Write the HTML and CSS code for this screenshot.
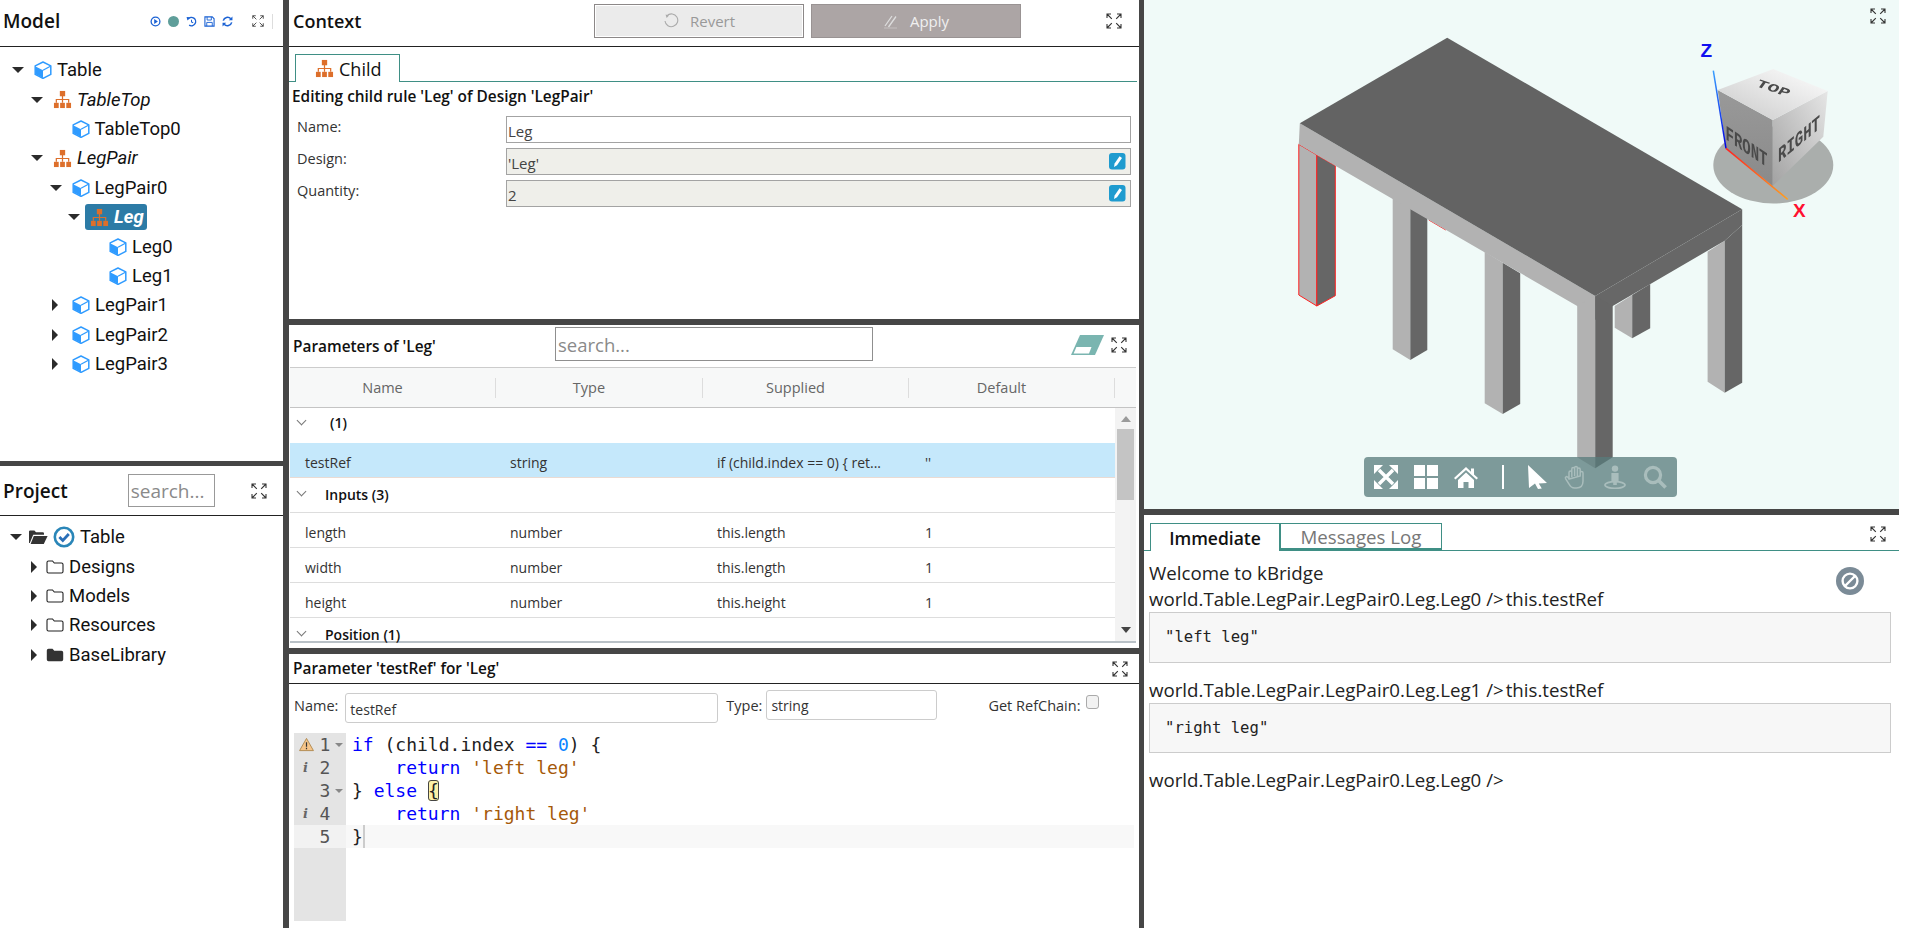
FILE: index.html
```html
<!DOCTYPE html>
<html lang="en">
<head>
<meta charset="utf-8">
<title>kBridge</title>
<link rel="stylesheet" href="styles.css">
</head>
<body>
<svg class="defs" width="0" height="0" aria-hidden="true">
  <symbol id="cube" viewBox="0 0 18 18">
    <path d="M9 1 16.8 4.8V13.4L9 17.4 1.2 13.4V4.8Z" fill="#fff" stroke="#2f9bff" stroke-width="1.5" stroke-linejoin="round"/>
    <path d="M1.6 5.4 9 9.2V17L1.6 13.2Z" fill="#2f9bff"/>
    <path d="M9 9.2 16.4 5.2" stroke="#2f9bff" stroke-width="1.3" fill="none"/>
  </symbol>
  <symbol id="org" viewBox="0 0 20 20">
    <g fill="#dd6f2b">
      <rect x="7.2" y="1" width="5.6" height="5.6"/>
      <rect x="1" y="13.5" width="5" height="5.5"/>
      <rect x="7.5" y="13.5" width="5" height="5.5"/>
      <rect x="14" y="13.5" width="5" height="5.5"/>
    </g>
    <path d="M10 6V13.5M3.5 13.5V10H16.5V13.5" fill="none" stroke="#dd6f2b" stroke-width="1.3"/>
  </symbol>
  <symbol id="full" viewBox="0 0 16 16">
    <path d="M1 5V1H5M1 1 5.8 5.8M11 1H15V5M15 1 10.2 5.8M1 11V15H5M1 15 5.8 10.2M15 11V15H11M15 15 10.2 10.2" fill="none" stroke="#333" stroke-width="1.1"/>
  </symbol>
  <symbol id="pencil" viewBox="0 0 17 17">
    <rect width="16.5" height="16.5" rx="3" fill="#1f9bcf"/>
    <path d="M5 14 5.6 10.6 10.6 3.2 13 5 8 12.2Z" fill="#fff"/>
  </symbol>
  <symbol id="folder" viewBox="0 0 18 16">
    <path d="M1 3.5Q1 2 2.5 2H6.5L8.3 4H15.5Q17 4 17 5.5V12.5Q17 14 15.5 14H2.5Q1 14 1 12.5Z" fill="none" stroke="#222" stroke-width="1.1"/>
  </symbol>
  <symbol id="folderfill" viewBox="0 0 18 16">
    <path d="M.8 3.5Q.8 1.8 2.5 1.8H6.5L8.3 3.8H15.5Q17.2 3.8 17.2 5.5V12.5Q17.2 14.2 15.5 14.2H2.5Q.8 14.2.8 12.5Z" fill="#333"/>
  </symbol>
</svg>

<main class="app">
  <section class="col col-left">
    <div class="panel model-panel">
      <header class="head head-model">
        <h2 class="title-lg">Model</h2>
        <div class="model-tools">
          <svg class="tool" viewBox="0 0 12 12"><circle cx="6" cy="6" r="4.8" fill="none" stroke="#1b62d4" stroke-width="1.4"/><path d="M4.6 3.4 8.6 6 4.6 8.6Z" fill="#1b62d4"/></svg>
          <span class="dot"></span>
          <svg class="tool" viewBox="0 0 12 12"><path d="M2.2 3.4A4.6 4.6 0 1 1 3.4 10" fill="none" stroke="#1b62d4" stroke-width="1.5"/><path d="M.6 1.2 4.6 1.4 1.6 5Z" fill="#1b62d4"/><path d="M6 4V6.4L7.8 7.4" fill="none" stroke="#1b62d4" stroke-width="1.1"/></svg>
          <svg class="tool" viewBox="0 0 12 12"><path d="M1 1H9L11 3V11H1Z" fill="#fff" stroke="#1b62d4" stroke-width="1.2"/><path d="M3.4 1V4.4H8V1M3 11V7H9V11" fill="none" stroke="#1b62d4" stroke-width="1"/></svg>
          <svg class="tool" viewBox="0 0 12 12"><path d="M1.4 5A4.8 4.8 0 0 1 9.6 3M10.6 7A4.8 4.8 0 0 1 2.4 9" fill="none" stroke="#1b62d4" stroke-width="1.7"/><path d="M11.4 .6V4.6H7.4ZM.6 11.4V7.4H4.6Z" fill="#1b62d4"/></svg>
        </div>
        <svg class="full full-sm"><use href="#full"/></svg>
        <span class="tick"></span>
      </header>
      <div class="tree tree-model">
        <div class="row l0"><i class="arr down"></i><svg class="ico"><use href="#cube"/></svg><span>Table</span></div>
        <div class="row l1"><i class="arr down"></i><svg class="ico org"><use href="#org"/></svg><em>TableTop</em></div>
        <div class="row l2"><i class="arr none"></i><svg class="ico"><use href="#cube"/></svg><span>TableTop0</span></div>
        <div class="row l1"><i class="arr down"></i><svg class="ico org"><use href="#org"/></svg><em>LegPair</em></div>
        <div class="row l2"><i class="arr down"></i><svg class="ico"><use href="#cube"/></svg><span>LegPair0</span></div>
        <div class="row l3"><i class="arr down"></i><span class="sel"><svg class="ico org"><use href="#org"/></svg><em>Leg</em></span></div>
        <div class="row l4"><i class="arr none"></i><svg class="ico"><use href="#cube"/></svg><span>Leg0</span></div>
        <div class="row l4"><i class="arr none"></i><svg class="ico"><use href="#cube"/></svg><span>Leg1</span></div>
        <div class="row l2"><i class="arr right"></i><svg class="ico"><use href="#cube"/></svg><span>LegPair1</span></div>
        <div class="row l2"><i class="arr right"></i><svg class="ico"><use href="#cube"/></svg><span>LegPair2</span></div>
        <div class="row l2"><i class="arr right"></i><svg class="ico"><use href="#cube"/></svg><span>LegPair3</span></div>
      </div>
    </div>
    <div class="panel project-panel">
      <header class="head head-project">
        <h2 class="title-lg">Project</h2>
        <input class="search-sm" placeholder="search...">
        <svg class="full"><use href="#full"/></svg>
      </header>
      <div class="tree tree-project">
        <div class="row p0"><i class="arr down"></i>
          <svg class="fold-open" viewBox="0 0 20 16"><path d="M1 14V2.6Q1 1.4 2.2 1.4H6.4L8 3.2H14.8Q16 3.2 16 4.4V5.8H5.2L1.8 14Z" fill="#333"/><path d="M5.8 7H19.6L15.8 15H2.6Z" fill="#333"/></svg>
          <svg class="check" viewBox="0 0 22 22"><circle cx="11" cy="11" r="9.2" fill="#fff" stroke="#2a86b8" stroke-width="2.6"/><path d="M6.4 11 9.8 14.4 15.8 8" fill="none" stroke="#2a6fb8" stroke-width="2.8"/></svg>
          <span>Table</span></div>
        <div class="row p1"><i class="arr right"></i><svg class="fold"><use href="#folder"/></svg><span>Designs</span></div>
        <div class="row p1"><i class="arr right"></i><svg class="fold"><use href="#folder"/></svg><span>Models</span></div>
        <div class="row p1"><i class="arr right"></i><svg class="fold"><use href="#folder"/></svg><span>Resources</span></div>
        <div class="row p1"><i class="arr right"></i><svg class="fold"><use href="#folderfill"/></svg><span>BaseLibrary</span></div>
      </div>
    </div>
  </section>

  <section class="col col-center">
    <div class="panel context-panel">
      <header class="head head-context">
        <h2 class="title-ctx">Context</h2>
        <button class="btn btn-revert"><svg class="btn-ico" viewBox="0 0 16 16"><path d="M4 2.6A6.4 6.4 0 1 1 2 8" fill="none" stroke="#aaa" stroke-width="1.1"/><path d="M2.6 1.4 6 2.4 3.6 5Z" fill="#aaa"/></svg>Revert</button>
        <button class="btn btn-apply"><svg class="btn-ico" viewBox="0 0 16 16"><path d="M2 13 9 3M5.5 14 13 3.5" fill="none" stroke="#ddd" stroke-width="1.3"/><path d="M1 15H14" stroke="#c4bfbf" stroke-width="1"/></svg>Apply</button>
        <svg class="full full-ctx"><use href="#full"/></svg>
      </header>
      <div class="tabs tabs-ctx">
        <div class="tab tab-on"><svg class="ico-tab"><use href="#org"/></svg>Child</div>
      </div>
      <p class="edit-title">Editing child rule 'Leg' of Design 'LegPair'</p>
      <div class="form">
        <label>Name:</label><div class="field"><span>Leg</span></div>
        <label>Design:</label><div class="field ro"><span>'Leg'</span><svg class="pen"><use href="#pencil"/></svg></div>
        <label>Quantity:</label><div class="field ro"><span>2</span><svg class="pen"><use href="#pencil"/></svg></div>
      </div>
    </div>

    <div class="panel params-panel">
      <header class="head head-params">
        <h3 class="title-sm title-params">Parameters of 'Leg'</h3>
        <input class="search-lg" placeholder="search...">
        <svg class="eraser" viewBox="0 0 35 22"><path d="M10 1H34L25 21H1Z" fill="#7ab5b0"/><path d="M6.4 13H21.5L19 19.4H3.6Z" fill="#fff"/></svg>
        <svg class="full"><use href="#full"/></svg>
      </header>
      <div class="grid-wrap">
        <div class="grid-head">
          <div>Name</div><div>Type</div><div>Supplied</div><div>Default</div>
        </div>
        <div class="grid-body">
          <div class="grid-rows">
            <div class="g-group g-first"><i class="chev"></i><b class="g-one">(1)</b></div>
            <div class="g-row g-sel"><span>testRef</span><span>string</span><span>if (child.index == 0) { ret...</span><span>''</span></div>
            <div class="g-group g-mid"><i class="chev"></i><b>Inputs (3)</b></div>
            <div class="g-row"><span>length</span><span>number</span><span>this.length</span><span>1</span></div>
            <div class="g-row"><span>width</span><span>number</span><span>this.length</span><span>1</span></div>
            <div class="g-row"><span>height</span><span>number</span><span>this.height</span><span>1</span></div>
            <div class="g-group g-last"><i class="chev"></i><b>Position (1)</b></div>
          </div>
          <div class="sbar">
            <i class="s-up"></i>
            <i class="s-thumb"></i>
            <i class="s-down"></i>
          </div>
        </div>
      </div>
    </div>

    <div class="panel param-panel">
      <header class="head head-param">
        <h3 class="title-sm">Parameter 'testRef' for 'Leg'</h3>
        <svg class="full"><use href="#full"/></svg>
      </header>
      <div class="param-fields">
        <label>Name:</label><div class="pf pf-name">testRef</div>
        <label class="lbl-type">Type:</label><div class="pf pf-type">string</div>
        <label class="lbl-ref">Get RefChain:</label><span class="cb"></span>
      </div>
      <div class="editor">
        <div class="gutter">
          <div class="g-line"><svg class="warn" viewBox="0 0 16 15"><path d="M8 1 15.4 14H.6Z" fill="#f6c58a" stroke="#b08a50" stroke-width="1"/><path d="M8 5V10M8 11V12.6" stroke="#333" stroke-width="1.3"/></svg><span class="num">1</span><i class="fold-arr"></i></div>
          <div class="g-line"><em class="info">i</em><span class="num">2</span></div>
          <div class="g-line"><span class="num">3</span><i class="fold-arr"></i></div>
          <div class="g-line"><em class="info">i</em><span class="num">4</span></div>
          <div class="g-line g-active"><span class="num">5</span></div>
        </div>
        <div class="code">
          <div class="c-line"><span class="kw">if</span> (child.index <span class="kw">==</span> <span class="nb">0</span>) {</div>
          <div class="c-line">    <span class="kw">return</span> <span class="st">'left leg'</span></div>
          <div class="c-line">} <span class="kw">else</span> <span class="br">{</span></div>
          <div class="c-line">    <span class="kw">return</span> <span class="st">'right leg'</span></div>
          <div class="c-line c-active">}<i class="caret"></i></div>
        </div>
      </div>
    </div>
  </section>

  <section class="col col-right">
    <div class="panel view-panel">
      <svg class="scene" viewBox="1144 0 755 509" width="755" height="509">
        <defs>
          <linearGradient id="gTop" x1="0" y1="1" x2="1" y2="0"><stop offset="0" stop-color="#c8c8c8"/><stop offset="1" stop-color="#fff"/></linearGradient>
          <linearGradient id="gLeft" x1="0" y1="0" x2="0" y2="1"><stop offset="0" stop-color="#999"/><stop offset="1" stop-color="#8a8a8a"/></linearGradient>
          <linearGradient id="gRight" x1="1" y1="0" x2="0" y2="1"><stop offset="0" stop-color="#e6e6e6"/><stop offset="1" stop-color="#a2a2a2"/></linearGradient>
          <linearGradient id="gZ" x1="0" y1="0" x2="0" y2="1"><stop offset="0" stop-color="#3aa0ff"/><stop offset="1" stop-color="#0000e0"/></linearGradient>
          <linearGradient id="gX" x1="0" y1="0" x2="1" y2="1"><stop offset="0" stop-color="#ff2020"/><stop offset="1" stop-color="#ffa020"/></linearGradient>
        </defs>
        <!-- back leg -->
        <polygon class="lt" points="1614.7,306 1632.2,295 1632.2,338.3 1614.7,327.7"/>
        <polygon class="dk" points="1632.2,295 1650.2,284 1650.2,328.3 1632.2,338.3"/>
        <!-- hidden selected leg hint -->
        <path d="M1428.8 220 1445.8 230" stroke="#f33" stroke-width="1" fill="none"/>
        <!-- right leg -->
        <polygon class="lt" points="1707.6,251.7 1724.7,240.7 1724.7,392.7 1707.6,381.7"/>
        <polygon class="dk" points="1724.7,240.7 1742.2,225 1742.2,382.7 1724.7,392.7"/>
        <!-- leg 2 -->
        <polygon class="lt" points="1392.7,197.7 1410.3,208.3 1410.3,360 1392.7,349.3"/>
        <polygon class="dk" points="1410.3,208.3 1427.3,218.3 1427.3,350 1410.3,360"/>
        <!-- leg 3 -->
        <polygon class="lt" points="1484.7,251.7 1502.7,262.7 1502.7,414 1484.7,403.3"/>
        <polygon class="dk" points="1502.7,262.7 1520.2,273.3 1520.2,404 1502.7,414"/>
        <!-- selected leg -->
        <polygon class="lt sel-edge" points="1298.8,144.3 1316.8,155 1316.8,306 1298.8,295"/>
        <polygon class="dk sel-edge" points="1316.8,155 1335.3,165.7 1335.3,295.7 1316.8,306"/>
        <!-- aprons -->
        <polygon class="lt" points="1299.8,123.3 1595.2,296 1595.2,320 1577.2,306 1316.8,155 1298.8,144.3"/>
        <polygon class="dk2" points="1595.2,296 1742.2,209.3 1742.2,225 1724.7,240.7 1612.7,306 1595.2,320"/>
        <!-- front leg -->
        <polygon class="lt" points="1577.2,306 1595.2,296 1595.2,468.3 1577.2,457.3"/>
        <polygon class="dk" points="1595.2,296 1612.7,306 1612.7,457.3 1595.2,468.3"/>
        <!-- top -->
        <polygon class="tp" points="1447.2,37.7 1742.2,209.3 1595.2,296 1299.8,123.3"/>
        <!-- view cube -->
        <ellipse cx="1773.3" cy="165" rx="60" ry="38.5" fill="#aaaeac"/>
        <polygon fill="url(#gLeft)" points="1717.7,90 1772.7,120 1772.7,186 1726,148.3"/>
        <polygon fill="url(#gRight)" points="1772.7,120 1827.7,91 1823.3,136.7 1772.7,186"/>
        <polygon fill="url(#gTop)" points="1773.3,69 1827.7,91 1772.7,120 1717.7,90"/>
        <g class="cube-text">
          <text transform="matrix(1 .68 0 1.5 1725.5 139)" class="ct">FRONT</text>
          <text transform="matrix(1 -.83 0 1.5 1778 163)" class="ct">RIGHT</text>
          <text transform="matrix(1.5 .5 -.6 .85 1755 86)" class="ct ct-top">TOP</text>
        </g>
        <line x1="1713.3" y1="70.7" x2="1726" y2="148.3" stroke="url(#gZ)" stroke-width="1.5"/>
        <polyline points="1726,148.3 1787.7,199.3" stroke="url(#gX)" stroke-width="1.5" fill="none"/>
        <text x="1700.5" y="57.3" class="axis axis-z">Z</text>
        <text x="1793" y="216.7" class="axis axis-x">X</text>
      </svg>
      <svg class="full full-view"><use href="#full"/></svg>
      <div class="toolbar">
        <svg class="tb" viewBox="0 0 24 24"><path d="M5 5 19 19M19 5 5 19" stroke="#fff" stroke-width="3.4"/><path d="M0 0H9L0 9ZM24 0H15L24 9ZM0 24H9L0 15ZM24 24H15L24 15Z" fill="#fff"/></svg>
        <svg class="tb" viewBox="0 0 24 24"><path d="M0 0H11V11H0ZM13 0H24V11H13ZM0 13H11V24H0ZM13 13H24V24H13Z" fill="#fff"/></svg>
        <svg class="tb" viewBox="0 0 24 24"><path d="M12 2 0 13 1.5 14.5 12 5 22.5 14.5 24 13 20 9.4V3.4H17V6.7Z" fill="#fff"/><path d="M4 15 12 7.6 20 15V23H14.5V17H9.5V23H4Z" fill="#fff"/></svg>
        <span class="tb-div"></span>
        <svg class="tb" viewBox="0 0 24 24"><path d="M5 0 24 18 15.8 18.6 18.8 23.5 15 24 12 18.6 6 23Z" fill="#fff"/></svg>
        <svg class="tb" viewBox="0 0 24 24"><path d="M6 14V7.5Q6 6 7.4 6T8.8 7.5V12M8.8 11V4Q8.8 2.6 10.2 2.6T11.6 4V11M11.6 10.5V3Q11.6 1.5 13 1.5T14.4 3V11M14.4 11V4.5Q14.4 3 15.8 3T17.2 4.5V11M17.2 11V8Q17.2 6.6 18.6 6.6T20 8V16Q20 23 13.5 23H11.5Q8 23 6 19L2.6 13.6Q2 12 3.4 11.6 4.6 11.4 6 14Z" fill="none" stroke="#a9bdbc" stroke-width="1.5"/></svg>
        <svg class="tb" viewBox="0 0 24 24"><circle cx="12" cy="3.6" r="3.2" fill="#a9bdbc"/><path d="M8.4 8H15.6V16H13.8V20H10.2V16H8.4Z" fill="#a9bdbc"/><ellipse cx="12" cy="20" rx="10" ry="3.4" fill="none" stroke="#a9bdbc" stroke-width="1.7"/></svg>
        <svg class="tb" viewBox="0 0 24 24"><circle cx="10" cy="10" r="7.6" fill="none" stroke="#a9bdbc" stroke-width="3.2"/><path d="M15.6 15.6 22.6 22.6" stroke="#a9bdbc" stroke-width="3.6"/></svg>
      </div>
    </div>
    <div class="panel imm-panel">
      <div class="tabs tabs-imm">
        <div class="tab tab-on tab-imm">Immediate</div>
        <div class="tab tab-off">Messages Log</div>
        <svg class="full full-imm"><use href="#full"/></svg>
      </div>
      <div class="console">
        <svg class="ban" viewBox="0 0 28 28"><circle cx="14" cy="14" r="14" fill="#7b8b97"/><circle cx="14" cy="14" r="7.4" fill="none" stroke="#fff" stroke-width="2.4"/><path d="M9 19 19 9" stroke="#fff" stroke-width="2.4"/></svg>
        <div class="c-text">Welcome to kBridge</div>
        <div class="c-text">world.Table.LegPair.LegPair0.Leg.Leg0 /&gt;<span class="cmd">this.testRef</span></div>
        <pre class="out">"left leg"</pre>
        <div class="c-text c-next">world.Table.LegPair.LegPair0.Leg.Leg1 /&gt;<span class="cmd">this.testRef</span></div>
        <pre class="out out-2">"right leg"</pre>
        <div class="c-text c-next">world.Table.LegPair.LegPair0.Leg.Leg0 /&gt;</div>
      </div>
    </div>
  </section>
</main>
</body>
</html>
```
FILE: styles.css
```css
* { box-sizing: border-box; }
html, body { margin: 0; height: 928px; overflow: hidden; }
body { background: #fff; font-family: "Open Sans", sans-serif; color: #222; }
.defs { position: absolute; }
.app { display: flex; width: 1899px; height: 928px; background: #464646; }
.col { display: flex; flex-direction: column; }
.col-left { width: 283px; gap: 5px; }
.col-center { width: 850px; margin: 0 5px 0 6px; gap: 6px; }
.col-right { flex: 1; gap: 6px; }
.panel { background: #fff; position: relative; overflow: hidden; }
.model-panel { height: 461px; }
.project-panel { flex: 1; }
.context-panel { height: 319px; }
.params-panel { height: 323px; }
.param-panel { flex: 1; }
.view-panel { height: 509px; background: #f0faf8; }
.imm-panel { flex: 1; }

.head { display: flex; align-items: center; }
.title-lg { margin: 0; font: 600 19px "Open Sans", sans-serif; color: #111; }
.head-model { height: 47px; padding: 0 0 4px 3px; border-bottom: 1px solid #222; }
.model-tools { display: flex; align-items: center; gap: 7px; margin-left: 90px; }
.tool { width: 11px; height: 11px; display: block; }
.dot { width: 11px; height: 11px; border-radius: 50%; background: #5f9e9a; }
.full { width: 16px; height: 16px; flex: none; display: block; }
.full-sm { width: 12px; height: 12px; margin-left: 19px; }
.tick { width: 1px; height: 15px; background: #ddd; margin-left: 8px; }
.head-project { height: 50px; padding-left: 3px; border-bottom: 1px solid #222; }
.search-sm { width: 87px; height: 33px; margin-left: 60px; padding: 0 2px; border: 1px solid #999; font: 19px "Open Sans", sans-serif; border-radius: 0; outline: 0; }
.search-sm::placeholder, .search-lg::placeholder { color: #8a8a8a; opacity: 1; }
.head-project .full { margin-left: 36px; }

.tree { font: 18.5px Roboto, sans-serif; color: #111; }
.tree-model { padding-top: 8.5px; }
.tree-project { padding-top: 6.5px; }
.row { display: flex; align-items: center; height: 29.4px; }
.row em { font-style: italic; }
.l0 { padding-left: 12px; }
.l1 { padding-left: 31px; }
.l2 { padding-left: 49.5px; }
.l3 { padding-left: 68px; }
.l4 { padding-left: 87px; }
.arr { width: 12px; margin-right: 10px; flex: none; height: 0; display: block; }
.arr.down { border-left: 6px solid transparent; border-right: 6px solid transparent; border-top: 6px solid #2b2b2b; }
.arr.right { width: 6px; margin: 0 14px 0 2.5px; border-top: 6px solid transparent; border-bottom: 6px solid transparent; border-left: 6px solid #2b2b2b; }
.ico { width: 18px; height: 18px; margin-right: 5px; flex: none; }
.ico.org { width: 19px; height: 19px; }
.sel { display: inline-flex; align-items: center; height: 26px; margin-left: -5px; padding: 0 3px 0 5px; background: #2c7ba6; border-radius: 3px; color: #fff; font-weight: 700; }

.p0 { padding-left: 10px; }
.p0 .arr { margin-right: 6px; }
.fold-open { width: 20px; height: 16px; margin-right: 5px; }
.check { width: 22px; height: 22px; margin-right: 5px; }
.p1 { padding-left: 28.5px; }
.p1 .fold { width: 18px; height: 16px; margin-right: 5px; margin-left: 3px; }
.p1 .arr { margin-right: 6px; }

.head-context { height: 47px; padding-bottom: 4px; border-bottom: 1px solid #222; }
.title-ctx { margin: 0; width: 305px; padding-left: 4px; font: 600 18px "Open Sans", sans-serif; color: #111; }
.btn { display: flex; align-items: center; justify-content: center; gap: 11px; width: 210px; height: 34px; margin-right: 7px; font: 15px "Open Sans", sans-serif; }
.btn-revert { background: #ebebeb; color: #999; border: 1px solid #8c8888; box-shadow: inset 0 0 0 1px #fff; }
.btn-apply { background: #aca5a5; color: #f0f0f0; border: 1px solid #999393; }
.btn-ico { width: 16px; height: 16px; }
.full-ctx { margin-left: 78px; }

.tabs { display: flex; position: relative; }
.tabs-ctx { height: 28px; margin: 7px 2px 0 0; padding-left: 6px; border-bottom: 1px solid #3f8f85; }
.tab { display: flex; align-items: center; border: 1px solid #3f8f85; background: #fff; color: #111; }
.tab-on { border-bottom: 0; height: calc(100% + 1px); }
.tabs-ctx .tab { width: 105px; justify-content: flex-start; padding: 0 0 0 19px; font: 18px "Open Sans", sans-serif; }
.ico-tab { width: 19px; height: 19px; margin-right: 5px; }
.edit-title { margin: 2px 0 0; height: 23px; padding-left: 3px; font: 600 15.4px/26px "Open Sans", sans-serif; color: #111; white-space: nowrap; }
.form { display: grid; grid-template-columns: 209px 1fr; grid-auto-rows: 27px; row-gap: 5px; padding: 9px 8px 0 8px; font-size: 14.5px; }
.form label { color: #333; line-height: 22px; }
.field { display: flex; align-items: center; justify-content: space-between; border: 1.5px solid #a3a3a3; padding: 2px 4px 0 1px; color: #444; font-size: 15px; }
.field.ro { background: #efefea; }
.pen { width: 17px; height: 17px; margin-top: -2px; }

.head-params { height: 42px; }
.title-sm { margin: 0; font: 600 15.4px "Open Sans", sans-serif; color: #111; padding-left: 4px; white-space: nowrap; }
.title-params { width: 266px; }
.search-lg { width: 318px; height: 34px; padding: 0 2px; border: 1px solid #8f8f8f; font: 18.5px "Open Sans", sans-serif; outline: 0; border-radius: 0; margin-top: -4px; }
.eraser { width: 35px; height: 22px; margin-left: 197px; margin-top: -2px; }
.head-params .full { margin-left: 6px; margin-top: -2px; }
.grid-wrap { margin-left: 1px; width: 846px; height: 276px; border-top: 1px solid #ccc; border-bottom: 2px solid #b9c1c7; }
.grid-head { display: grid; grid-template-columns: 206px 207px 206px 206px; height: 40px; background: #f7f8f8; border-bottom: 1px solid #c4c4c4; align-items: center; text-align: center; font-size: 14.5px; color: #666; }
.grid-head div { height: 20px; line-height: 20px; border-right: 1px solid #ddd; padding-right: 20px; }
.grid-body { display: flex; height: 233px; }
.grid-rows { width: 825px; font-size: 14px; }
.g-group { display: flex; align-items: center; height: 35px; border-bottom: 1px solid #ddd; font-weight: 600; color: #111; }
.g-first { border-bottom: 0; padding-bottom: 6px; }
.g-mid { padding-bottom: 2px; }
.g-last { height: 24px; border-bottom: 0; padding-top: 8px; }
.chev { display: block; width: 7px; height: 7px; margin: -5px 0 0 8px; border-right: 1px solid #777; border-bottom: 1px solid #777; transform: rotate(45deg); }
.g-group b { margin-left: 20px; font-weight: 600; }
.g-group b.g-one { margin-left: 25px; }
.g-row { display: grid; grid-template-columns: 205px 207px 208px 1fr; align-items: center; height: 35px; padding: 4px 0 0 15px; border-bottom: 1px solid #ddd; color: #333; background: #fff; white-space: nowrap; }
.g-sel { background: #c5e8fb; border-bottom: 1px solid #eadbd3; }
.sbar { flex: 1; display: flex; flex-direction: column; align-items: center; background: #f3f3f3; }
.s-up { margin-top: 8px; border: 5px solid transparent; border-top: 0; border-bottom: 6px solid #9a9a9a; }
.s-thumb { width: 17px; height: 71px; margin-top: 7px; background: #c4c4c4; }
.s-down { margin-top: auto; margin-bottom: 8px; border: 5px solid transparent; border-bottom: 0; border-top: 6px solid #444; }

.head-param { height: 30px; justify-content: space-between; border-bottom: 1px solid #222; padding-right: 11px; }
.param-fields { display: flex; align-items: flex-start; height: 49px; padding: 6px 0 0 5px; font-size: 14.5px; color: #333; }
.param-fields label { line-height: 32px; }
.pf { border: 1px solid #ccc; border-radius: 3px; height: 30px; line-height: 29px; padding-left: 4px; font-size: 14px; }
.pf-name { width: 373px; margin: 3px 0 0 7px; line-height: 31px; }
.lbl-type { margin-left: 8px; }
.pf-type { width: 171px; margin-left: 4px; }
.lbl-ref { margin-left: 51px; }
.cb { width: 13px; height: 14px; margin: 5px 0 0 6px; border: 1px solid #aaa; border-radius: 3px; background: #f2f2f2; }

.editor { display: flex; height: 188px; padding-left: 5px; margin-right: 5px; font: 18px/23px "DejaVu Sans Mono", monospace; }
.gutter { width: 52px; background: #e4e4e4; color: #555; flex: none; }
.g-line { display: flex; align-items: center; height: 23px; position: relative; padding-left: 24px; }
.g-active { background: #f2f2f2; }
.num { display: block; width: 14px; font-size: 18px; text-align: center; }
.warn { position: absolute; left: 5px; top: 4px; width: 15px; height: 15px; }
.info { position: absolute; left: 9px; top: 0; font: italic 600 13px/23px "DejaVu Serif", serif; color: #666; }
.fold-arr { display: block; margin-left: 3px; border: 4px solid transparent; border-top: 4px solid #888; border-bottom: 0; }
.code { flex: 1; color: #222; }
.c-line { height: 23px; padding-left: 6px; white-space: pre; }
.c-active { background: #f8f8f8; }
.kw { color: #0000ff; }
.nb { color: #0a84ff; }
.st { color: #a5590a; }
.br { background: #fbf1a8; outline: 1px solid #444; outline-offset: -1px; border-radius: 3px; }
.caret { display: inline-block; width: 2px; height: 23px; background: #ccc; vertical-align: top; }

.scene { display: block; }
.lt { fill: #b2b2b2; }
.dk { fill: #666; }
.dk2 { fill: #676767; }
.tp { fill: #636363; }
.sel-edge { stroke: #f22; stroke-width: 1; }
.cube-text { filter: blur(.6px); }
.ct { font: 700 14px "Liberation Mono", monospace; fill: #4a4a4a; }
.ct-top { font-size: 12px; }
.axis { font: 700 19px "Liberation Sans", sans-serif; }
.axis-z { fill: #1010f0; }
.axis-x { fill: #ff1030; }
.full-view { position: absolute; right: 13px; top: 8px; }
.toolbar { position: absolute; left: 220px; top: 457px; width: 313px; height: 40px; display: flex; align-items: center; gap: 16px; padding-left: 10px; background: rgba(88,124,124,.76); border-radius: 4px; }
.tb { width: 24px; height: 24px; flex: none; }
.tb-div { width: 2px; height: 24px; background: #fff; margin: 0 3px 0 8px; }

.tabs-imm { height: 28px; margin-top: 8px; padding-left: 6px; border-bottom: 1px solid #3f8f85; align-items: flex-start; }
.tab-imm { width: 130px; justify-content: center; font: 600 17.5px "Open Sans", sans-serif; }
.tab-off { width: 162px; justify-content: center; height: 27px; border-width: 1.5px; border-bottom-width: 2px; font: 18.7px "Open Sans", sans-serif; color: #777; }
.tab-on.tab-imm { height: 28px; }
.full-imm { position: absolute; right: 13px; top: 3px; }
.console { position: relative; padding: 9px 8px 0 5px; font-size: 18.7px; color: #222; }
.c-text { height: 26px; line-height: 26px; white-space: pre; }
.cmd { margin-left: 2px; }
.c-next { margin-top: 14px; }
.ban { position: absolute; right: 35px; top: 16px; width: 28px; height: 28px; }
.out { margin: 0; height: 51px; padding: 0 15px; border: 1px solid #ccc; background: #f7f7f7; font: 15.6px/49px "DejaVu Sans Mono", monospace; color: #222; }
.out-2 { height: 50px; }
```
